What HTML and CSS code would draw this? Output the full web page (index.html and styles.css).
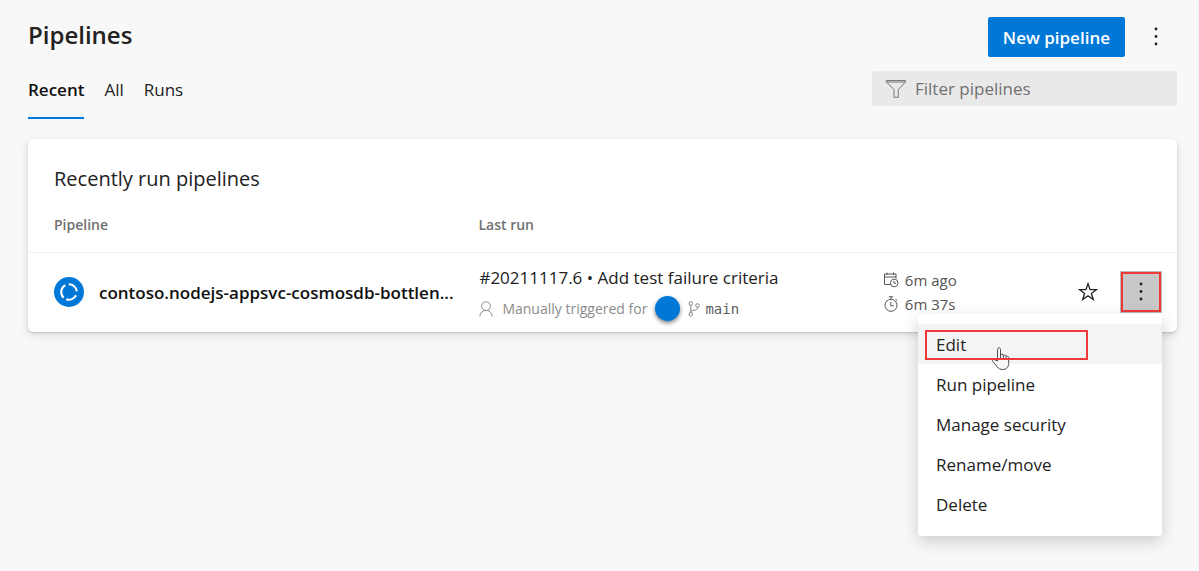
FILE: index.html
```html
<!DOCTYPE html>
<html lang="en">
<head>
<meta charset="utf-8">
<meta name="viewport" content="width=device-width, initial-scale=1">
<title>Pipelines</title>
<link rel="stylesheet" href="styles.css">
</head>
<body>
<div class="page">
  <header class="page-header">
    <h1 class="page-title">Pipelines</h1>
    <div class="header-actions">
      <button class="primary-button" type="button">New pipeline</button>
      <button class="more-button" type="button" aria-label="More options">
        <svg class="dots" viewBox="0 0 4 20" aria-hidden="true"><circle cx="2" cy="2" r="1.4"/><circle cx="2" cy="9.5" r="1.4"/><circle cx="2" cy="17" r="1.4"/></svg>
      </button>
    </div>
  </header>

  <div class="toolbar">
    <nav class="tabs" aria-label="Pipeline views">
      <a class="tab tab-active" href="#recent" aria-current="page">Recent</a>
      <a class="tab" href="#all">All</a>
      <a class="tab" href="#runs">Runs</a>
    </nav>
    <div class="filter">
      <svg class="filter-icon" viewBox="0 0 22 20" aria-hidden="true"><path d="M1.3 1.5h19.2v1.4L13.3 10.600v7.700H9v-7.700L1.300 2.900zM1.500 3h18.800"/></svg>
      <input class="filter-input" type="text" placeholder="Filter pipelines" aria-label="Filter pipelines">
    </div>
  </div>

  <main class="card">
    <h2 class="card-title">Recently run pipelines</h2>
    <table class="runs">
      <colgroup><col class="col-name"><col class="col-run"><col class="col-time"><col class="col-actions"></colgroup>
      <thead>
        <tr><th scope="col">Pipeline</th><th scope="col">Last run</th><td></td><td></td></tr>
      </thead>
      <tbody>
        <tr>
          <td>
            <div class="pipeline">
              <svg class="status" viewBox="0 0 30 30" aria-hidden="true"><circle cx="15" cy="15" r="15" fill="#0078d7"/><g fill="none" stroke="#fff" stroke-width="2"><path d="M14.700 7.300A7.800 7.800 0 0 1 22.800 14.300"/><path d="M22 18.300A7.800 7.800 0 0 1 12.300 22.300"/><path d="M9.600 20.700A7.800 7.800 0 0 1 11.300 8.200"/></g></svg>
              <a class="pipeline-name" href="#pipeline">contoso.nodejs-appsvc-cosmosdb-bottlen...</a>
            </div>
          </td>
          <td>
            <div class="run">
              <a class="run-title" href="#run">#20211117.6 • Add test failure criteria</a>
              <div class="run-meta">
                <svg class="person" viewBox="0 0 14 16" aria-hidden="true"><circle cx="7" cy="5.200" r="4.400"/><path d="M.8 15.500a6.200 6.200 0 0 1 12.400 0"/></svg>
                <span class="trigger">Manually triggered for</span>
                <span class="avatar"></span>
                <svg class="branch" viewBox="0 0 12 16" aria-hidden="true"><circle cx="2.800" cy="2.500" r="1.800"/><circle cx="9.500" cy="4.500" r="1.800"/><circle cx="2.800" cy="13.300" r="1.800"/><path d="M2.800 4.300v7.200M9.500 6.300c0 2.500-1.500 2.700-3.500 2.900-2 .2-3.200.8-3.200 2.300"/></svg>
                <span class="branch-name">main</span>
              </div>
            </div>
          </td>
          <td>
            <div class="times">
              <div class="time">
                <svg class="time-icon" viewBox="0 0 16 16" aria-hidden="true"><path d="M7.500 12.500H1.500v-10.500h11.500v4.500M1.500 5h11.500M4 .5v2.500M10.500 .5v2.500"/><circle cx="11.200" cy="11" r="3.800"/><path d="M11 9v2.200h2"/></svg>
                <span>6m ago</span>
              </div>
              <div class="time">
                <svg class="time-icon" viewBox="0 0 16 16" aria-hidden="true"><circle cx="8" cy="9.300" r="6"/><path d="M5.800 .8h4.400M8 .8v2.500M7.800 6v3.800h3M12.500 3.200l1.700 1.600"/></svg>
                <span>6m 37s</span>
              </div>
            </div>
          </td>
          <td>
            <div class="actions">
              <button class="star-button" type="button" aria-label="Add to favorites">
                <svg class="star" viewBox="0 0 20 20" aria-hidden="true"><path d="M10 1.800l2.100 5.900h6.300l-5 3.700 1.900 6.200-5.300-3.800-5.300 3.800 1.900-6.200-5-3.700h6.300z"/></svg>
              </button>
              <div class="menu-anchor">
                <button class="row-more" type="button" aria-label="Pipeline options" aria-haspopup="menu" aria-expanded="true">
                  <svg class="dots" viewBox="0 0 4 20" aria-hidden="true"><circle cx="2" cy="2" r="1.400"/><circle cx="2" cy="9.500" r="1.400"/><circle cx="2" cy="17" r="1.400"/></svg>
                </button>
                <div class="menu" role="menu">
                  <button class="menu-item menu-item-hover" type="button" role="menuitem">Edit</button>
                  <button class="menu-item" type="button" role="menuitem">Run pipeline</button>
                  <button class="menu-item" type="button" role="menuitem">Manage security</button>
                  <button class="menu-item" type="button" role="menuitem">Rename/move</button>
                  <button class="menu-item" type="button" role="menuitem">Delete</button>
                  <svg class="cursor" viewBox="0 0 18 24" aria-hidden="true"><path d="M5.500 14V2.500c0-2.200 3-2.200 3 0V8c.3-1.200 2.800-1 2.900.6.500-1 2.700-.6 2.700.9.600-.8 2.600-.4 2.600 1.200v5.800c0 3.500-2.500 6-6 6-2.500 0-4.200-.9-5.500-2.700L.8 14.500c-1-1.500.8-2.700 2-1.700z"/><path d="M8.500 7v4.500M11.400 8.500v3M14.100 9.500v2.500"/></svg>
                  <span class="highlight"></span>
                </div>
              </div>
            </div>
          </td>
        </tr>
      </tbody>
    </table>
  </main>
</div>
</body>
</html>
```
FILE: styles.css
```css
* {
  box-sizing: border-box;
}

body {
  margin: 0;
  background: #f8f8f8;
  color: #222;
  font-family: "Open Sans", "Noto Sans", sans-serif;
  font-size: 17px;
  line-height: 24px;
}

button,
input {
  font: inherit;
  color: inherit;
  border: 0;
  margin: 0;
}

a {
  color: inherit;
  text-decoration: none;
}

svg {
  flex: none;
}

.page {
  min-height: 100vh;
  padding: 17px 22px 0 28px;
}

.page-header,
.toolbar,
.header-actions,
.actions,
.pipeline,
.run-meta,
.time {
  display: flex;
  align-items: center;
}

.page-header,
.toolbar {
  justify-content: space-between;
}

.page-title {
  margin: 0;
  font-size: 24px;
  font-weight: 600;
  line-height: 36px;
}

.page-header {
  align-items: flex-start;
}

.primary-button {
  height: 40px;
  padding: 2px 15px 0;
  border-radius: 2px;
  background: #0078d7;
  color: #fff;
  font-weight: 600;
}

.more-button {
  display: grid;
  place-items: center;
  width: 42px;
  height: 40px;
  margin-left: 10px;
  padding: 0;
  background: none;
}

.dots {
  width: 4px;
  height: 20px;
  fill: #222;
}

.toolbar {
  align-items: flex-start;
  padding-top: 14px;
}

.tabs {
  display: flex;
  gap: 20px;
}

.tab {
  padding: 7px 0 15px;
  border-bottom: 2px solid transparent;
}

.tab-active {
  border-color: #0078d7;
  color: #111;
  font-weight: 600;
}

.filter {
  display: flex;
  align-items: center;
  gap: 8px;
  width: 305px;
  height: 35px;
  padding: 0 13px;
  border-radius: 3px;
  background: #e9e9e9;
}

.filter-icon {
  width: 22px;
  height: 20px;
  fill: none;
  stroke: #777;
}

.filter-input {
  flex: 1;
  min-width: 0;
  padding: 0;
  background: none;
}

.filter-input::placeholder {
  color: #717171;
  opacity: 1;
}

.card {
  margin-top: 20px;
  padding-top: 25px;
  border-radius: 5px;
  background: #fff;
  box-shadow: 0 1px 2px rgba(0, 0, 0, .16), 0 3px 10px rgba(0, 0, 0, .12);
}

.card-title {
  margin: 0 26px;
  font-size: 20px;
  font-weight: 400;
  line-height: 30px;
}

.runs {
  width: 100%;
  table-layout: fixed;
  border-collapse: collapse;
}

.runs th,
.runs td {
  padding: 0;
  text-align: left;
}

.runs th {
  height: 58px;
  padding-top: 4px;
  color: #717171;
  font-size: 14px;
  font-weight: 600;
}

.runs tr > :first-child {
  padding-left: 26px;
}

.runs tbody td {
  height: 80px;
  border-top: 1px solid #eee;
}

.col-name {
  width: 39.2%;
}

.col-run {
  width: 35.2%;
}

.col-actions {
  width: 110px;
}

.pipeline {
  gap: 15px;
  padding-right: 16px;
}

.status {
  width: 30px;
  height: 30px;
}

.pipeline-name {
  overflow: hidden;
  padding-top: 2px;
  color: #111;
  font-weight: 600;
  text-overflow: ellipsis;
  white-space: nowrap;
}

.run {
  display: grid;
  gap: 6px;
  padding: 3px 0 0 1px;
}

.run-meta {
  color: #8c8c8c;
  font-size: 14px;
}

.person {
  width: 14px;
  height: 16px;
  margin-right: 9px;
  fill: none;
  stroke: #8c8c8c;
}

.avatar {
  width: 25px;
  height: 25px;
  margin: 0 8px;
  border-radius: 50%;
  background: #0078d7;
  box-shadow: 0 2px 4px rgba(0, 0, 0, .5);
}

.branch {
  width: 12px;
  height: 16px;
  margin-right: 5px;
  fill: none;
  stroke: #808080;
}

.branch-name {
  color: #606060;
  font-family: "DejaVu Sans Mono", "Liberation Mono", monospace;
  font-size: 14px;
}

.time {
  gap: 6px;
  color: #555;
  font-size: 15px;
}

.time-icon {
  width: 16px;
  height: 16px;
  fill: none;
  stroke: #555;
}

.actions {
  justify-content: flex-end;
  gap: 23px;
  padding-right: 16px;
}

.star-button {
  display: grid;
  padding: 0;
  background: none;
}

.star {
  width: 20px;
  height: 20px;
  fill: none;
  stroke: #222;
  stroke-width: 1.3;
}

.menu-anchor {
  position: relative;
}

.row-more {
  display: grid;
  place-items: center;
  width: 40px;
  height: 40px;
  padding: 0;
  border: 2px solid #f03a3a;
  outline: 1px solid #bbb;
  background: #c8c8c8;
}

.menu {
  position: absolute;
  top: 42px;
  right: -1px;
  width: 244px;
  padding: 10px 0 12px;
  border-radius: 4px;
  background: #fff;
  box-shadow: 0 5px 16px rgba(0, 0, 0, .18);
}

.menu-item {
  display: block;
  width: 100%;
  height: 40px;
  padding: 1px 18px 0;
  background: none;
  text-align: left;
}

.menu-item-hover {
  background: #f4f4f4;
}

.cursor {
  position: absolute;
  top: 33px;
  left: 74px;
  width: 18px;
  height: 24px;
  fill: #f8f8f8;
  stroke: #4b4b58;
}

.highlight {
  position: absolute;
  top: 16px;
  left: 7px;
  width: 163px;
  height: 30px;
  border: 2px solid #f03a3a;
  pointer-events: none;
}
```
